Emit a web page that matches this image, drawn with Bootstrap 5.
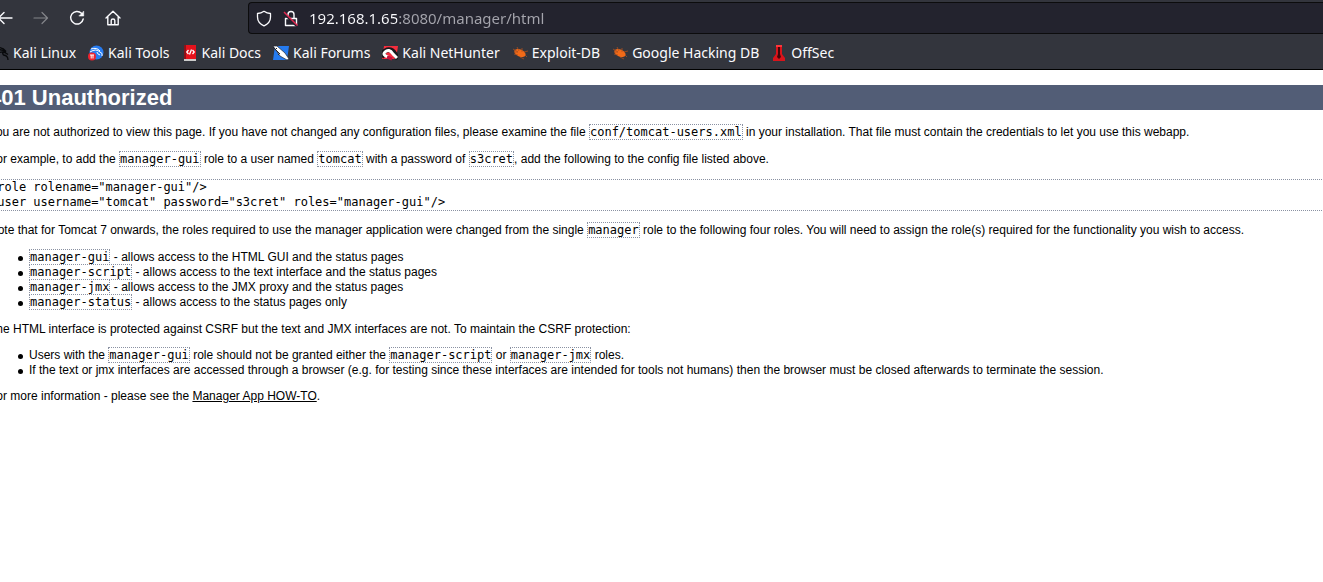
<!DOCTYPE html>
<html lang="en">
<head>
<meta charset="utf-8">
<meta name="viewport" content="width=device-width, initial-scale=1">
<title>401 Unauthorized</title>
<link href="https://cdn.jsdelivr.net/npm/bootstrap@5.3.0/dist/css/bootstrap.min.css" rel="stylesheet">
<style>
  body { background: #fff; color: #000; overflow-x: hidden; }
  .browser { background: #33353d; border-bottom: 1px solid #000; font: 15px/20px "Noto Sans", sans-serif; color: #fbfbfe; }
  .toolbar-row { height: 36px; margin-left: -5px; }
  .tool { width: 20px; height: 20px; border: 0; padding: 0; background: none; color: #fbfbfe; display: flex; align-items: center; justify-content: center; }
  .tool:disabled { color: #84858a; }
  .tools { gap: 16px; width: 253px; }
  .address { height: 32px; background: #23232e; border: 1px solid #0c0c0d; border-right: 0; border-radius: 4px 0 0 4px; padding-left: 7px; gap: 10px; }
  .address input { border: 0; outline: 0; padding: 0; font: inherit; color: transparent; background: linear-gradient(90deg, #fbfbfe 88px, #a5a5ad 88px); -webkit-background-clip: text; background-clip: text; }
  .bookmarks { height: 33px; gap: 12px; margin-left: -7px; font-size: 14px; }
  .bookmarks a { color: #fbfbfe; text-decoration: none; gap: 4px; }
  .tomcat { font: 12px "Liberation Sans", Arial, sans-serif; line-height: normal; margin: 0 -11px; padding-top: 15px; }
  .tomcat h1 { font-size: 22px; font-weight: 700; line-height: 25px; color: #fff; background: #525d76; margin: 0 0 15px; }
  .tomcat p, .tomcat ul, .tomcat pre { margin: 0 0 12px; }
  .tomcat ul { padding-left: 40px; list-style: none; }
  .tomcat li { position: relative; }
  .tomcat li::before { content: ""; position: absolute; left: -11px; top: 6px; width: 5px; height: 5px; border-radius: 50%; background: #000; }
  .tomcat code, .tomcat pre { font: 12px/15px "DejaVu Sans Mono", monospace; color: #000; border: 1px dotted #8a91a2; }
  .tomcat pre { overflow: hidden; }
  .tomcat a { color: #000; }
</style>
</head>
<body>
<header class="browser">
  <div class="toolbar-row d-flex align-items-center">
    <div class="tools d-flex flex-shrink-0 align-items-center">
      <button class="tool" aria-label="Back"><svg width="18" height="16" viewBox="0 0 18 16" fill="none" stroke="currentColor" stroke-width="1.4" stroke-linecap="round" stroke-linejoin="round"><path d="M16 8H3M8 2.5 2.5 8 8 13.5"/></svg></button>
      <button class="tool" aria-label="Forward" disabled><svg width="18" height="16" viewBox="0 0 18 16" fill="none" stroke="currentColor" stroke-width="1.2" stroke-linecap="round" stroke-linejoin="round"><path d="M2 8h13M10 2.5 15.500 8 10 13.500"/></svg></button>
      <button class="tool" aria-label="Reload"><svg width="16" height="16" viewBox="0 0 16 16" fill="none" stroke="currentColor" stroke-width="1.4" stroke-linecap="round"><path d="M12.500 3.300A6.300 6.300 0 1 0 14.200 9"/><path d="M14.700 1.500V6H10.200Z" fill="currentColor" stroke-width=".6"/></svg></button>
      <button class="tool" aria-label="Home"><svg width="16" height="16" viewBox="0 0 16 16" fill="none" stroke="currentColor" stroke-width="1.4" stroke-linecap="round" stroke-linejoin="round"><path d="M1 8 8 1.200 15 8M2.800 6.500V14.800H13.200V6.500M6.200 14.500V10.500Q6.200 9 8 9T9.800 10.500V14.500"/></svg></button>
    </div>
    <div class="address d-flex align-items-center flex-grow-1">
      <svg width="16" height="17" viewBox="0 0 16 16" fill="none" stroke="#fbfbfe" stroke-width="1.300" stroke-linejoin="round"><path d="M8 .8Q11 2.800 14.500 3V6.500Q14.500 12.500 8 15.300Q1.500 12.500 1.500 6.500V3Q5 2.800 8 .8Z"/></svg>
      <svg width="17" height="17" viewBox="0 0 16 17" fill="none"><path d="M3 8.500H14V15.500H3ZM5.500 8V4.500A3 3 0 0 1 11.500 4.500V8" stroke="#fbfbfe" stroke-width="1.400" stroke-linejoin="round"/><path d="m1.500 3.500 13 13" stroke="#23232e" stroke-width="2"/><path d="m1.500 2 13.500 13.500" stroke="#e22850" stroke-width="1.500"/></svg>
      <input class="flex-grow-1" type="text" aria-label="Address" value="192.168.1.65:8080/manager/html" spellcheck="false">
    </div>
  </div>
  <nav class="bookmarks d-flex align-items-center text-nowrap" aria-label="Bookmarks">
    <a class="d-flex align-items-center" href="#"><svg width="16" height="16" viewBox="0 0 16 16" fill="none" stroke="#08090b" stroke-width="1.300"><path d="M1 3Q9 1 13 6.500M1 6Q8 3 13 7M6 8Q10 5 15 9.500M13 7Q8 7 10.500 10Q15 10.500 15 15"/></svg>Kali Linux</a>
    <a class="d-flex align-items-center" href="#"><svg width="16" height="16" viewBox="0 0 16 16"><circle cx="8.500" cy="7.500" r="7" fill="#277cf2"/><path d="M3 4Q9 2 12 6M2 7Q8 3 12 7Q15 8 14 11M9 7Q9 9 12 10" stroke="#fff" fill="none"/><circle cx="4" cy="11.500" r="4" fill="#ee222e"/><path d="M2 10h4M3.200 10v3.500M5 10v3.500" stroke="#fff" fill="none"/></svg>Kali Tools</a>
    <a class="d-flex align-items-center" href="#"><svg width="16" height="16" viewBox="0 0 16 16"><path d="M2 0H14V14H2Z" fill="#e5121c"/><path d="M2 0h2v14H2Z" fill="#8c1218"/><path d="M2 14h12v2H2Z" fill="#ccc"/><path d="M6.500 5 4.800 7 6.500 9M10.500 5 12.200 7 10.500 9M9.500 4.500 7.500 9.500" stroke="#fff" stroke-width="1.300" fill="none"/></svg>Kali Docs</a>
    <a class="d-flex align-items-center" href="#"><svg width="16" height="16" viewBox="0 0 16 16"><path d="M2 1H16L14 15H0Z" fill="#257bf0"/><path d="M0 1 4 1 12 8 16 14 14 15 7 11Z" fill="#fff" stroke="#222630" stroke-width=".7"/><path d="m0 2 6 6M4 3 2 5M7 8l-2 2" stroke="#222630"/></svg>Kali Forums</a>
    <a class="d-flex align-items-center" href="#"><svg width="16" height="16" viewBox="0 0 16 16"><path d="M2 1H16L14 14H0Z" fill="#f42d3d"/><path d="M3 12Q-1 7 5 5Q10 4 13 9L16 14" fill="none" stroke="#17191d" stroke-width="5"/><path d="M6 12Q0 10 3 7Q7 3 11 9L15 13" fill="none" stroke="#fff" stroke-width="3"/><path d="m5 12 5 2" stroke="#c3123f" stroke-width="3"/></svg>Kali NetHunter</a>
    <a class="d-flex align-items-center" href="#"><svg width="16" height="16" viewBox="0 0 16 16"><ellipse cx="8" cy="8" rx="6" ry="3.500" transform="rotate(25 8 8)" fill="#f26a18"/><path d="m1 4 5 3M5 2l2 4M10 3v4M12 7l4-1M13 10l2 2M8 12l4 2M2 9l4 1M2 7h4" stroke="#ad501f" stroke-width=".8"/></svg>Exploit-DB</a>
    <a class="d-flex align-items-center" href="#"><svg width="16" height="16" viewBox="0 0 16 16"><ellipse cx="8" cy="8" rx="6" ry="3.500" transform="rotate(25 8 8)" fill="#f26a18"/><path d="m1 4 5 3M5 2l2 4M10 3v4M12 7l4-1M13 10l2 2M8 12l4 2M2 9l4 1M2 7h4" stroke="#ad501f" stroke-width=".8"/></svg>Google Hacking DB</a>
    <a class="d-flex align-items-center" href="#"><svg width="16" height="16" viewBox="0 0 16 16"><path d="M5 0H11V9L14 13V16H2V13L5 9Z" fill="#d9141b"/><path d="M7 2H9V9L10 12 8 14 6 12 7 9Z" fill="#42070a"/><path d="M5 0h6v2H5Z" fill="#ff353a"/></svg>OffSec</a>
  </nav>
</header>
<main class="tomcat">
  <h1>401 Unauthorized</h1>
  <p>You are not authorized to view this page. If you have not changed any configuration files, please examine the file <code>conf/tomcat-users.xml</code> in your installation. That file must contain the credentials to let you use this webapp.</p>
  <p>For example, to add the <code>manager-gui</code> role to a user named <code>tomcat</code> with a password of <code>s3cret</code>, add the following to the config file listed above.</p>
  <pre>&lt;role rolename="manager-gui"/&gt;
&lt;user username="tomcat" password="s3cret" roles="manager-gui"/&gt;</pre>
  <p>Note that for Tomcat 7 onwards, the roles required to use the manager application were changed from the single <code>manager</code> role to the following four roles. You will need to assign the role(s) required for the functionality you wish to access.</p>
  <ul>
    <li><code>manager-gui</code> - allows access to the HTML GUI and the status pages</li>
    <li><code>manager-script</code> - allows access to the text interface and the status pages</li>
    <li><code>manager-jmx</code> - allows access to the JMX proxy and the status pages</li>
    <li><code>manager-status</code> - allows access to the status pages only</li>
  </ul>
  <p>The HTML interface is protected against CSRF but the text and JMX interfaces are not. To maintain the CSRF protection:</p>
  <ul>
    <li>Users with the <code>manager-gui</code> role should not be granted either the <code>manager-script</code> or <code>manager-jmx</code> roles.</li>
    <li>If the text or jmx interfaces are accessed through a browser (e.g. for testing since these interfaces are intended for tools not humans) then the browser must be closed afterwards to terminate the session.</li>
  </ul>
  <p>For more information - please see the <a href="#">Manager App HOW-TO</a>.</p>
</main>
<script src="https://cdn.jsdelivr.net/npm/bootstrap@5.3.0/dist/js/bootstrap.bundle.min.js"></script>
</body>
</html>
